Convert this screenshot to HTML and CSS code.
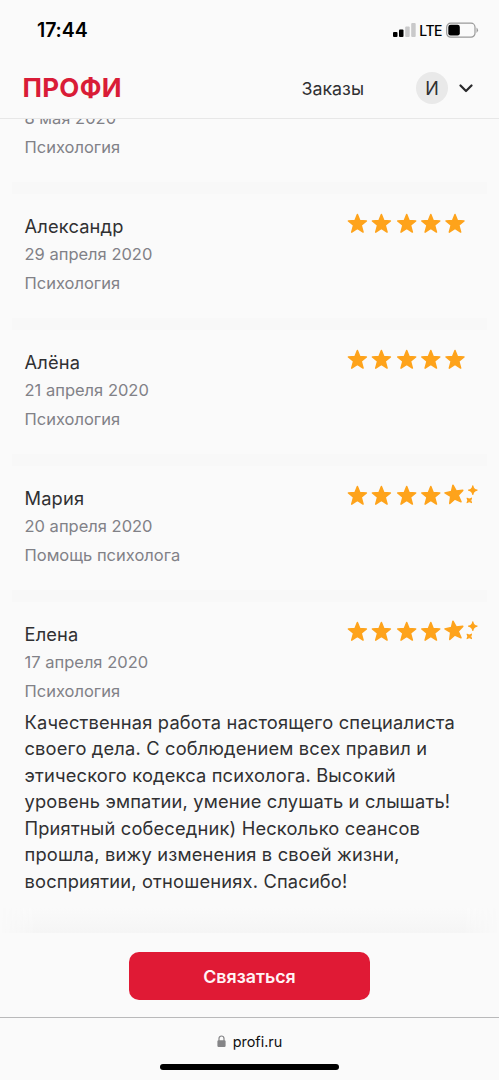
FILE: index.html
```html
<!DOCTYPE html>
<html lang="ru">
<head>
<meta charset="utf-8">
<meta name="viewport" content="width=device-width">
<title>Профи</title>
<link rel="stylesheet" href="styles.css">
</head>
<body>
<svg class="defs" aria-hidden="true">
  <defs>
    <path id="star" d="M0-9 2.400-2.900 9-2.500 3.800 1.700 5.700 8.600 0 4.900-5.700 8.600-3.800 1.700-9-2.500-2.400-2.900Z" stroke-width="1.500" stroke-linejoin="round"/>
    <path id="spark" d="M0-4.2Q.6-.6 4.2 0Q.6.6 0 4.2Q-.6.6-4.2 0Q-.6-.6 0-4.2Z" stroke-width="1.3" stroke-linejoin="round"/>
    <g id="four"><use href="#star" x="11.400" y="13.500"/><use href="#star" x="35.400" y="13.500"/><use href="#star" x="60.700" y="13.500"/><use href="#star" x="84.800" y="13.500"/></g>
    <g id="five"><use href="#four"/><use href="#star" x="109" y="13.500"/></g>
    <g id="plus"><use href="#four"/><use href="#star" transform="translate(108.200 12.100) rotate(-8)"/><use href="#spark" transform="translate(126.8 8.200)"/><use href="#spark" transform="translate(123.3 18.400) rotate(45) scale(.76)"/></g>
  </defs>
</svg>
<div class="screen">
  <div class="status">
    <span class="time">17:44</span>
    <div class="indicators">
      <svg class="signal" width="23" height="15"><rect x="0" y="9" width="4.5" height="5" rx="1"/><rect x="6" y="6.5" width="4.5" height="7.500" rx="1"/><rect class="dim" x="12.200" y="3.500" width="4.500" height="10.500" rx="1"/><rect class="dim" x="18.200" y="0" width="4.500" height="14" rx="1"/></svg>
      <span class="network">LTE</span>
      <svg class="battery" width="33" height="17"><rect x=".7" y="1.200" width="28.300" height="14" rx="4" fill="none" stroke="#999" stroke-width="1.200"/><rect x="2.300" y="2.800" width="11.500" height="10.800" rx="2.300"/><path d="M30.500 5.500q3 2.700 0 5.400z" fill="#999"/></svg>
    </div>
  </div>
  <header class="header">
    <span class="logo">ПРОФИ</span>
    <nav class="nav">
      <span class="orders">Заказы</span>
      <span class="avatar">И</span>
      <svg class="chevron" width="14" height="9"><path d="M1.500 1.500 7 7l5.500-5.500"/></svg>
    </nav>
  </header>
  <main class="reviews">
    <article class="review first">
      <div class="date">8 мая 2020</div>
      <div class="service">Психология</div>
    </article>
    <article class="review">
      <div class="name">Александр<svg class="rating"><use href="#five"/></svg></div>
      <div class="date">29 апреля 2020</div>
      <div class="service">Психология</div>
    </article>
    <article class="review">
      <div class="name">Алёна<svg class="rating"><use href="#five"/></svg></div>
      <div class="date">21 апреля 2020</div>
      <div class="service">Психология</div>
    </article>
    <article class="review">
      <div class="name">Мария<svg class="rating"><use href="#plus"/></svg></div>
      <div class="date">20 апреля 2020</div>
      <div class="service">Помощь психолога</div>
    </article>
    <article class="review">
      <div class="name">Елена<svg class="rating"><use href="#plus"/></svg></div>
      <div class="date">17 апреля 2020</div>
      <div class="service">Психология</div>
      <p class="text">Качественная работа настоящего специалиста<br>своего дела. С соблюдением всех правил и<br>этического кодекса психолога. Высокий<br>уровень эмпатии, умение слушать и слышать!<br>Приятный собеседник) Несколько сеансов<br>прошла, вижу изменения в своей жизни,<br>восприятии, отношениях. Спасибо!</p>
    </article>
  </main>
  <div class="fade"></div>
  <div class="action"><button class="contact">Связаться</button></div>
  <footer class="browser">
    <div class="address">
      <svg width="9" height="13"><path d="M2 6V3.500a2.500 2.500 0 0 1 5 0V6" fill="none" stroke="#858587" stroke-width="1.200"/><rect x=".4" y="5.300" width="8.200" height="6.700" rx="1.200" fill="#858587"/></svg>
      <span>profi.ru</span>
    </div>
    <div class="home"></div>
  </footer>
</div>
</body>
</html>
```
FILE: styles.css
```css
* { box-sizing: border-box; }
body { margin: 0; background: #fafafa; color: #303032; font-family: Inter, "Liberation Sans", sans-serif; }
.defs { position: absolute; width: 0; height: 0; }
.screen { width: 499px; height: 1080px; display: flex; flex-direction: column; overflow: hidden; }
.status { height: 58px; flex: none; display: flex; justify-content: space-between; align-items: center; padding: 2px 20px 0 37px; color: #000; }
.time { font-size: 19.500px; font-weight: 600; letter-spacing: -.1px; }
.indicators { display: flex; align-items: center; }
.dim { fill: #c9c9ca; }
.network { margin: 0 4px 0 3px; font-size: 14px; font-weight: 500; letter-spacing: -.5px; }
.header { height: 61px; flex: none; display: flex; justify-content: space-between; align-items: center; padding: 0 26px 0 22.500px; border-bottom: 1px solid #e7e7e7; }
.logo { color: #d91c37; font-size: 26px; font-weight: 700; letter-spacing: .3px; margin-top: -1px; }
.nav { display: flex; align-items: center; }
.orders { font-size: 17.800px; margin-right: 52px; }
.avatar { width: 32px; height: 32px; border-radius: 50%; background: #e9e9e9; display: flex; align-items: center; justify-content: center; font-size: 18px; margin-right: 11px; }
.chevron { fill: none; stroke: #29292b; stroke-width: 2.200; stroke-linecap: round; stroke-linejoin: round; }
.reviews { height: 791px; flex: none; overflow: hidden; padding: 0 12px; }
.review { border-top: 12px solid #f8f8f8; padding: 19px 0 20px 12.500px; }
.first { border: 0; padding-top: 0; margin-top: -15px; }
.name { height: 27px; line-height: 27px; font-size: 18.300px; letter-spacing: .15px; display: flex; justify-content: space-between; }
.rating { width: 141px; height: 24px; margin-top: -2.600px; fill: #fea31b; stroke: #fea31b; }
.date, .service { height: 29px; line-height: 29px; font-size: 16.500px; color: #818187; }
.text { margin: 2.500px 0 0; font-size: 18.300px; letter-spacing: .17px; line-height: 26.500px; white-space: nowrap; }
.fade { height: 25px; margin-top: -2px; flex: none; background: linear-gradient(#fafafa, #f5f5f5); -webkit-mask-image: linear-gradient(90deg, transparent, #000 35px, #000 464px, transparent); mask-image: linear-gradient(90deg, transparent, #000 35px, #000 464px, transparent); }
.action { height: 84px; flex: none; padding-top: 19px; display: flex; justify-content: center; align-items: flex-start; }
.contact { width: 241px; height: 48px; border: 0; border-radius: 10px; background: #e01a35; color: #fff3f5; font: 600 17.800px Inter, sans-serif; }
.browser { height: 63px; flex: none; border-top: 1px solid #b9b9ba; display: flex; flex-direction: column; align-items: center; color: #111; }
.address { height: 46px; display: flex; align-items: center; gap: 7px; font-size: 14.400px; }
.home { width: 179px; height: 6px; border-radius: 3px; background: #000; }
```
